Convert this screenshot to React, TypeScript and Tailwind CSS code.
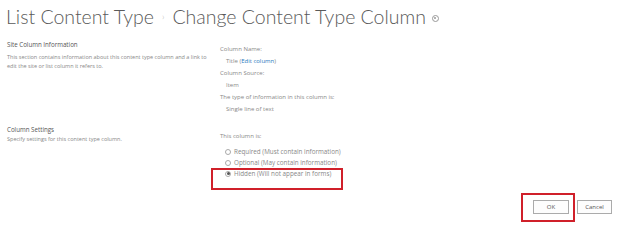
import React from "react";

export default function App() {
  return (
    <div className="relative w-[621px] h-[229px] overflow-hidden bg-white font-['Open_Sans',sans-serif] text-[#777]">
      <div className="flex items-center pl-[6px] pt-[4px] h-[30px] font-['Lato',sans-serif] text-[19.5px] leading-[26px] font-light text-[#5a5a5a]">
        <span>List Content Type</span>
        <span className="mx-[8px] text-[9px] text-[#aaa]">›</span>
        <span>Change Content Type Column</span>
        <span className="ml-[6px] mt-[2px] flex h-[7px] w-[7px] items-center justify-center rounded-full border border-[#999]">
          <span className="h-[2px] w-[2px] rounded-full bg-[#999]" />
        </span>
      </div>

      <div className="mt-[9px] flex pl-[7px]">
        <div className="w-[213px] shrink-0">
          <div className="text-[6.2px] leading-[12px] text-[#555]">Site Column Information</div>
          <div className="mt-[2px] w-[205px] text-[5.5px] leading-[9px] text-[#888]">
            This section contains information about this content type column and a link to edit the site or list column it refers to.
          </div>
        </div>
        <div className="mt-[4px] flex flex-col text-[6px] leading-[12px] text-[#888]">
          <div>Column Name:</div>
          <div className="pl-[6px]">
            Title (<span className="text-[#2a7bc0]">Edit column</span>)
          </div>
          <div>Column Source:</div>
          <div className="pl-[6px]">Item</div>
          <div>The type of information in this column is:</div>
          <div className="pl-[6px]">Single line of text</div>
        </div>
      </div>

      <div className="mt-[9px] flex pl-[7px]">
        <div className="w-[213px] shrink-0">
          <div className="text-[6.2px] leading-[12px] text-[#555]">Column Settings</div>
          <div className="mt-[-1px] text-[5.5px] leading-[9px] text-[#888]">
            Specify settings for this content type column.
          </div>
        </div>
        <div className="mt-[6px] flex flex-col text-[6px] text-[#888]">
          <div className="leading-[12px]">This column is:</div>
          <div className="mt-[4px] flex flex-col pl-[5px] text-[6.3px]">
            {[
              ["Required (Must contain information)", false],
              ["Optional (May contain information)", false],
              ["Hidden (Will not appear in forms)", true],
            ].map(([label, checked]) => (
              <div key={label as string} className="flex h-[11px] items-center">
                <span className="mr-[3px] flex h-[6px] w-[6px] items-center justify-center rounded-full border border-[#aaa] bg-white">
                  {checked ? <span className="h-[3px] w-[3px] rounded-full bg-[#555]" /> : null}
                </span>
                <span>{label as string}</span>
              </div>
            ))}
          </div>
        </div>
      </div>

      <div className="absolute left-[533px] top-[200px] flex gap-[8px]">
        <button className="h-[14px] w-[36px] border border-[#ababab] bg-[#fdfdfd] text-[6px] leading-none text-[#555]">OK</button>
        <button className="h-[14px] w-[35px] border border-[#ababab] bg-[#fdfdfd] text-[6px] leading-none text-[#555]">Cancel</button>
      </div>

      <div className="pointer-events-none absolute left-[211px] top-[168px] h-[22px] w-[132px] border-2 border-[#d0202a]" />
      <div className="pointer-events-none absolute left-[521px] top-[193px] h-[29px] w-[54px] border-2 border-[#d0202a]" />
    </div>
  );
}
